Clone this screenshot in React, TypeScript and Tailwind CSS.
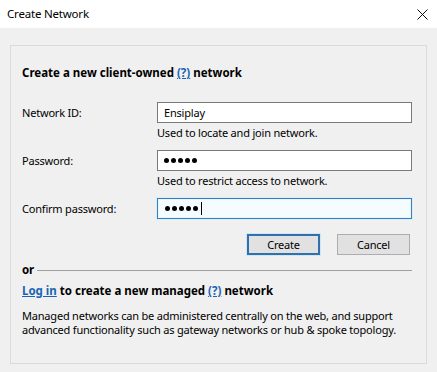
import React from 'react';

const font = { fontFamily: '"Noto Sans", "Open Sans", Arial, sans-serif' };

const Dots = ({ cursor }: { cursor?: boolean }) => (
  <div className="flex items-center gap-[2px]">
    {[0, 1, 2, 3, 4].map((i) => (
      <span key={i} className="block h-[5px] w-[5px] rounded-full bg-black" />
    ))}
    {cursor && <span className="ml-[1px] block h-[13px] w-px bg-black" />}
  </div>
);

const Field = ({
  label,
  help,
  focused,
  children,
}: {
  label: string;
  help?: string;
  focused?: boolean;
  children: React.ReactNode;
}) => (
  <div className="flex">
    <div className="flex h-[21px] w-[135px] items-center leading-[14px]">{label}</div>
    <div className="flex-1">
      <div
        className={
          focused
            ? 'flex h-[21px] items-center border border-[#3c7dbd] bg-[#f4fcff] pl-[7px] shadow-[0_0_0_1px_#d6f0fb,inset_0_0_0_1px_#e6f6fd]'
            : 'flex h-[21px] items-center border border-[#7a7a7a] bg-white pl-[6px]'
        }
      >
        {children}
      </div>
      {help && <div className="mt-[3px] leading-[14px]">{help}</div>}
    </div>
  </div>
);

export default function App() {
  return (
    <div
      className="h-[372px] w-[437px] bg-[#f0f0f0] text-[11px] tracking-[-0.2px] text-black"
      style={font}
    >
      {/* Title bar */}
      <div className="flex h-[28px] items-center justify-between bg-white pl-[7px] pr-[8px]">
        <span className="text-[11.5px] leading-[14px]">Create Network</span>
        <svg width="11" height="11" viewBox="0 0 11 11" className="mr-[1px]">
          <path d="M0.5 0.5 L10.5 10.5 M10.5 0.5 L0.5 10.5" stroke="#111" strokeWidth="1" />
        </svg>
      </div>

      <div className="px-[10px] pt-[17px]">
        <div className="h-[319px] border border-[#dadada] pl-[11px] pr-[14px] pt-[19px]">
          <div className="h-[16px] text-[11.5px] font-bold leading-[16px] tracking-normal">
            Create a new client-owned <span className="text-[#1a64b4] underline">(?)</span> network
          </div>

          <div className="mt-[21px] flex flex-col gap-[10px]">
            <Field label="Network ID:" help="Used to locate and join network.">
              <span className="leading-[14px]">Ensiplay</span>
            </Field>
            <Field label="Password:" help="Used to restrict access to network.">
              <Dots />
            </Field>
            <Field label="Confirm password:" focused>
              <Dots cursor />
            </Field>
          </div>

          <div className="mt-[15px] flex justify-end gap-[17px] pr-[2px]">
            <button className="flex h-[21px] w-[73px] items-center justify-center border-2 border-[#2f70ad] bg-[#e1e1e1] leading-[14px] shadow-[0_0_0_1px_#cfe6f7]">
              Create
            </button>
            <button className="flex h-[21px] w-[73px] items-center justify-center border border-[#adadad] bg-[#e1e1e1] leading-[14px]">
              Cancel
            </button>
          </div>

          <div className="mt-[8px] flex h-[14px] items-center gap-[3px]">
            <span className="text-[11.5px] font-bold leading-[14px]">or</span>
            <div className="h-px flex-1 bg-[#a0a0a0]" />
          </div>

          <div className="mt-[6px] h-[16px] text-[11.5px] font-bold leading-[16px] tracking-normal">
            <span className="text-[#1a64b4] underline">Log in</span> to create a new managed{' '}
            <span className="text-[#1a64b4] underline">(?)</span> network
          </div>

          <p className="mt-[10px] whitespace-nowrap leading-[14px]">
            Managed networks can be administered centrally on the web, and support
            <br />
            advanced functionality such as gateway networks or hub &amp; spoke topology.
          </p>
        </div>
      </div>
    </div>
  );
}
